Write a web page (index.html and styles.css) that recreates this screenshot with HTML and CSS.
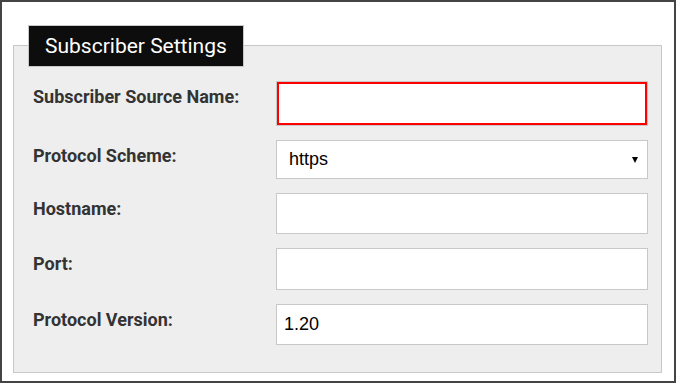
FILE: index.html
```html
<!DOCTYPE html>
<html>
    <head>
        <meta charset="utf-8">
        <title>Subscriber Settings</title>
        <link rel="stylesheet" href="styles.css">
    </head>
    <body>
        <div id="frame">
            <fieldset class="settings">
                <legend>Subscriber Settings</legend>
                <div class="rows">
                    <div class="row">
                        <label for="source-name">Subscriber Source Name:</label>
                        <input id="source-name" class="field invalid" type="text" value="">
                    </div>
                    <div class="row">
                        <label for="scheme">Protocol Scheme:</label>
                        <div class="select-wrap">
                            <select id="scheme" class="field select">
                                <option>https</option>
                                <option>http</option>
                            </select>
                        </div>
                    </div>
                    <div class="row">
                        <label for="hostname">Hostname:</label>
                        <input id="hostname" class="field" type="text" value="">
                    </div>
                    <div class="row">
                        <label for="port">Port:</label>
                        <input id="port" class="field" type="text" value="">
                    </div>
                    <div class="row">
                        <label for="version">Protocol Version:</label>
                        <input id="version" class="field" type="text" value="1.20">
                    </div>
                </div>
            </fieldset><!-- settings -->
        </div><!-- frame -->
    </body>
</html>
```

FILE: styles.css
```css
body {
    margin: 0;
    padding: 0;
    background: #ffffff;
}

#frame {
    box-sizing: border-box;
    width: 676px;
    height: 383px;
    border: 2px solid #444444;
    padding: 23px 12px 0 11px;
}

.settings {
    margin: 0;
    padding: 14px 13px 27px 14px;
    border: 1px solid #c8c8c8;
    background: #eeeeee;
}

.settings legend {
    margin: 0;
    padding: 8px 16px 7.5px;
    border: 1px solid #c8c8c8;
    background: #0d0d0d;
    color: #ffffff;
    font-family: Roboto, "Liberation Sans", sans-serif;
    font-size: 21px;
    line-height: normal;
}

.rows {
    display: flex;
    flex-direction: column;
    gap: 14px;
}

.row {
    display: grid;
    grid-template-columns: 248px 1fr;
    align-items: start;
}

.row label {
    padding: 5px 0 0 5px;
    color: #333333;
    font-family: Roboto, "Liberation Sans", sans-serif;
    font-weight: bold;
    font-size: 18px;
    line-height: normal;
}

.field {
    box-sizing: border-box;
    display: block;
    width: 100%;
    height: 41.5px;
    margin: 0;
    padding: 0 7px;
    border: 1px solid #c8c8c8;
    border-radius: 0;
    background: #ffffff;
    color: #000000;
    font-family: "Liberation Sans", Arial, sans-serif;
    font-size: 18px;
    outline: none;
}

.field.invalid {
    height: 45px;
    box-shadow: inset 0 0 0 2px #ff0000;
}

.select-wrap {
    position: relative;
}

.field.select {
    height: 39px;
    padding-left: 12px;
    -webkit-appearance: none;
    appearance: none;
}

.select-wrap:after {
    content: "";
    position: absolute;
    right: 10px;
    top: 17px;
    border-left: 3px solid transparent;
    border-right: 3px solid transparent;
    border-top: 6px solid #000000;
}
```
